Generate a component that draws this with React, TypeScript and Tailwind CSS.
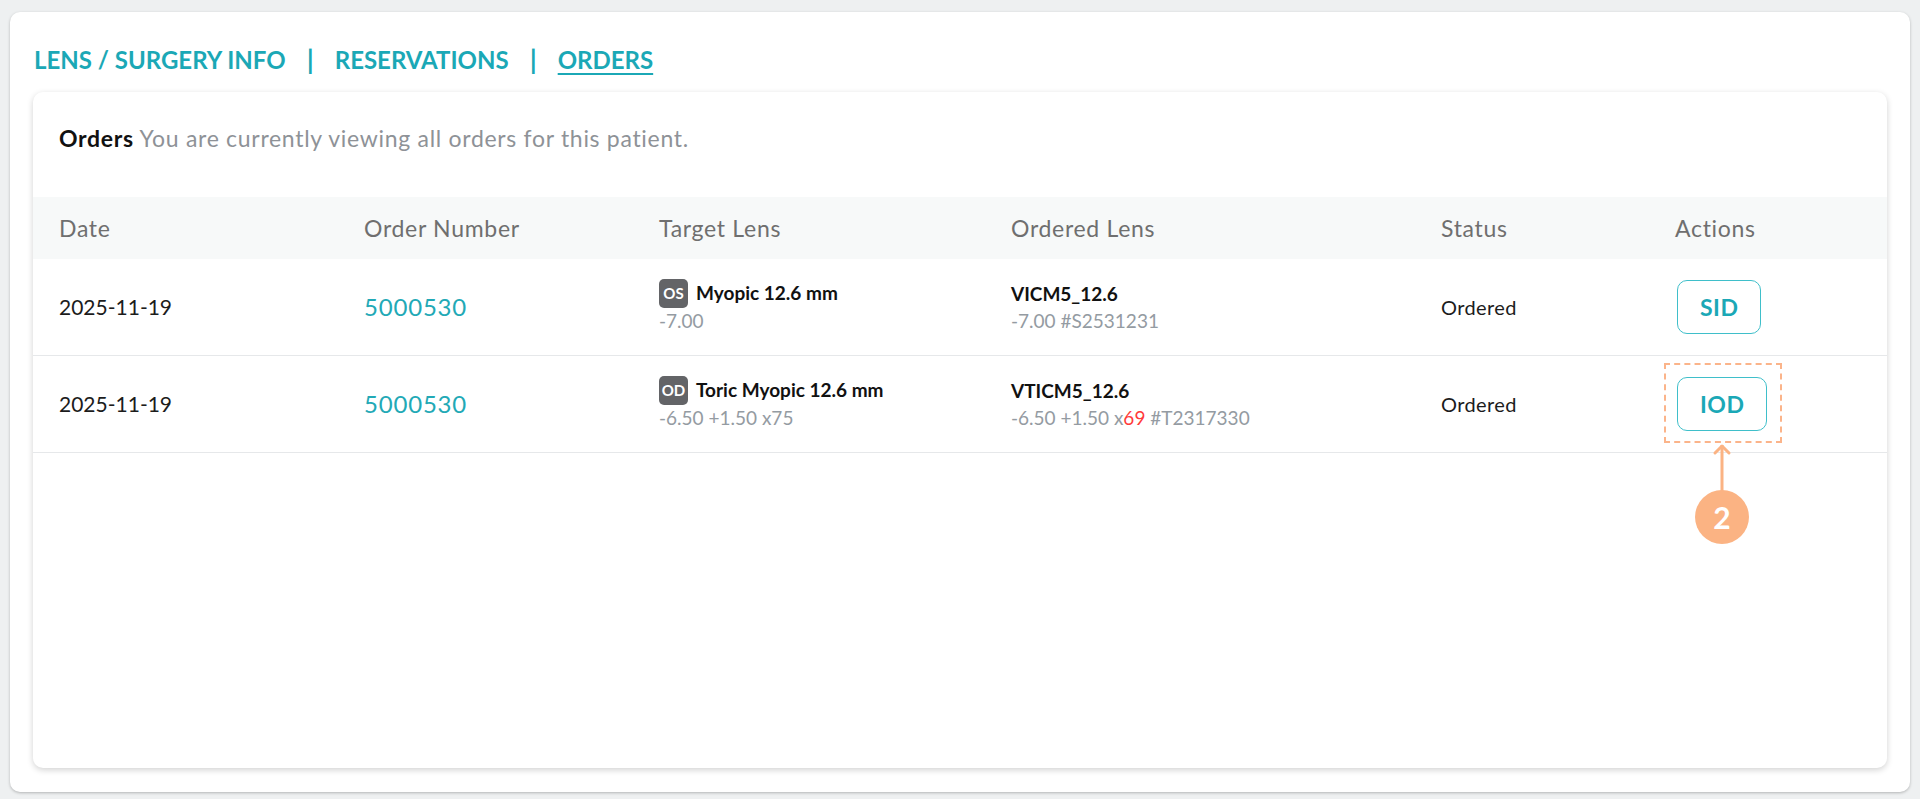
import React from "react";

interface OrderRow {
  date: string;
  number: string;
  eye: "OS" | "OD";
  target: string;
  targetRx: string;
  ordered: string;
  orderedRx: React.ReactNode;
  status: string;
  action: string;
  highlight?: boolean;
}

const ROWS: OrderRow[] = [
  {
    date: "2025-11-19",
    number: "5000530",
    eye: "OS",
    target: "Myopic 12.6 mm",
    targetRx: "-7.00",
    ordered: "VICM5_12.6",
    orderedRx: <>-7.00 #S2531231</>,
    status: "Ordered",
    action: "SID",
  },
  {
    date: "2025-11-19",
    number: "5000530",
    eye: "OD",
    target: "Toric Myopic 12.6 mm",
    targetRx: "-6.50 +1.50 x75",
    ordered: "VTICM5_12.6",
    orderedRx: (
      <>
        -6.50 +1.50 x<span className="text-[#ff3b3b]">69</span> #T2317330
      </>
    ),
    status: "Ordered",
    action: "IOD",
    highlight: true,
  },
];

const COLS = "grid grid-cols-[305px_295px_352px_430px_234px_1fr] items-center pl-[26px]";

const Callout: React.FC = () => (
  <>
    <div className="absolute left-[-13px] top-[-14px] w-[118px] h-[80px] border-2 border-dashed border-[#fbb48a]" />
    <svg className="absolute left-[15px] top-[66px]" width="60" height="114" viewBox="0 0 60 114">
      <path d="M30 2 L30 50" stroke="#fbb383" strokeWidth="3" fill="none" />
      <path d="M23 10 L30 3 L37 10" stroke="#fbb383" strokeWidth="3" fill="none" strokeLinecap="round" strokeLinejoin="round" />
    </svg>
    <div className="absolute left-[18px] top-[113px] w-[54px] h-[54px] rounded-full bg-[#fbb383] flex items-center justify-center text-white text-[30px] font-bold">
      2
    </div>
  </>
);

const Row: React.FC<{ row: OrderRow }> = ({ row }) => (
  <div className={`${COLS} h-[97px] border-b border-[#e6e8ea]`}>
    <div className="text-[21px] text-[#1c1c1c]">{row.date}</div>
    <div className="text-[24px] tracking-[0.8px] text-[#22a9b6]">{row.number}</div>
    <div className="flex flex-col mt-[-3px]">
      <div className="flex items-center gap-[8px]">
        <span className="w-[29px] h-[29px] rounded-[5px] bg-[#636467] text-white text-[15px] font-bold flex items-center justify-center">
          {row.eye}
        </span>
        <span className="text-[19px] font-bold text-[#111]">{row.target}</span>
      </div>
      <div className="text-[19px] text-[#949ba2] leading-[24px] mt-[1px]">{row.targetRx}</div>
    </div>
    <div className="flex flex-col mt-[-3px]">
      <div className="text-[19px] font-bold text-[#111] leading-[29px]">{row.ordered}</div>
      <div className="text-[19px] text-[#949ba2] leading-[24px] mt-[1px]">{row.orderedRx}</div>
    </div>
    <div className="text-[20px] tracking-[0.4px] text-[#1c1c1c]">{row.status}</div>
    <div className="pl-[2px]">
      <div className="relative inline-block">
        <button className="h-[54px] px-[22px] rounded-[10px] border border-[#3fbfca] bg-white text-[23px] tracking-[0.5px] font-bold text-[#1ba8b6]">
          {row.action}
        </button>
        {row.highlight && <Callout />}
      </div>
    </div>
  </div>
);

export default function App() {
  return (
    <div className="min-h-screen bg-[#eef0f1] px-[10px] pt-[12px] pb-[7px] font-['Lato',sans-serif]">
      <div className="bg-white rounded-[10px] shadow-[0_1px_3px_rgba(0,0,0,0.25)] px-[23px] pt-[34px] pb-[24px]">
        <div className="flex items-center h-[28px] pl-px text-[24px] font-bold text-[#1ba8b6] uppercase">
          <span>Lens / Surgery Info</span>
          <span className="mx-[21px] text-[27px]">|</span>
          <span>Reservations</span>
          <span className="mx-[21px] text-[27px]">|</span>
          <span className="underline underline-offset-4 decoration-2">Orders</span>
        </div>
        <div className="mt-[18px] h-[676px] bg-white rounded-[10px] shadow-[0_2px_6px_rgba(0,0,0,0.18)]">
          <div className="pt-[32px] pl-[26px] h-[60px] text-[23px] tracking-[0.7px] leading-[28px]">
            <span className="font-bold text-[#111]">Orders</span>{" "}
            <span className="text-[#8e9297]">You are currently viewing all orders for this patient.</span>
          </div>
          <div className={`${COLS} mt-[45px] h-[62px] bg-[#f7f9f9] text-[23px] tracking-[0.7px] text-[#6f6f6f]`}>
            <div>Date</div>
            <div>Order Number</div>
            <div>Target Lens</div>
            <div>Ordered Lens</div>
            <div>Status</div>
            <div>Actions</div>
          </div>
          {ROWS.map((row, i) => (
            <Row key={i} row={row} />
          ))}
        </div>
      </div>
    </div>
  );
}
